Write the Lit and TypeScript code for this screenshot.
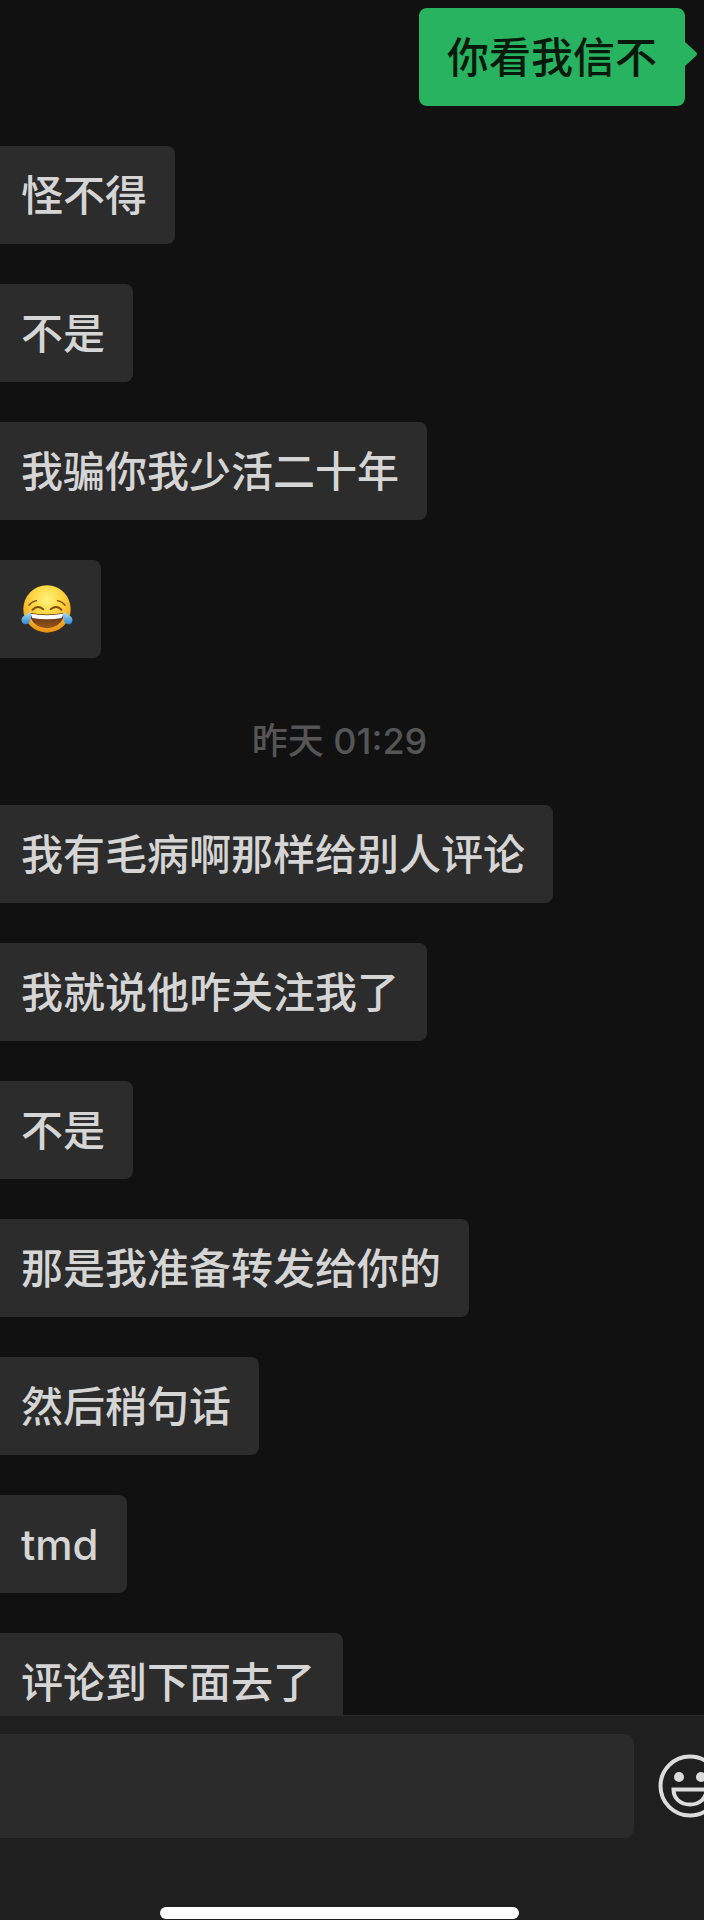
import { LitElement, html, css, svg } from "lit";
import { customElement, property } from "lit/decorators.js";

type Entry =
  | { kind: "sent" | "received"; text: string }
  | { kind: "joy" }
  | { kind: "time"; text: string };

const entries: Entry[] = [
  { kind: "sent", text: "你看我信不" },
  { kind: "received", text: "怪不得" },
  { kind: "received", text: "不是" },
  { kind: "received", text: "我骗你我少活二十年" },
  { kind: "joy" },
  { kind: "time", text: "昨天 01:29" },
  { kind: "received", text: "我有毛病啊那样给别人评论" },
  { kind: "received", text: "我就说他咋关注我了" },
  { kind: "received", text: "不是" },
  { kind: "received", text: "那是我准备转发给你的" },
  { kind: "received", text: "然后稍句话" },
  { kind: "received", text: "tmd" },
  { kind: "received", text: "评论到下面去了" },
];

const tear = svg`
  <path d="M9.200 26.500 C10 30.500 9.800 35.500 7.200 37.800 C4.600 39.900 .6 38.600 .5 34.800 C.4 31 5.200 29.600 9.200 26.500Z" fill="url(#tear)"/>
`;

/* Face with tears of joy */
const joyFace = html`
  <svg class="joy" viewBox="0 0 50 50" role="img" aria-label="笑哭">
    <defs>
      <radialGradient id="skin" cx="50%" cy="30%" r="70%">
        <stop offset="0" stop-color="#fff27c" />
        <stop offset=".45" stop-color="#fcd640" />
        <stop offset=".8" stop-color="#f6ae26" />
        <stop offset="1" stop-color="#e58a14" />
      </radialGradient>
      <linearGradient id="tear" x1="0" y1="0" x2="0" y2="1">
        <stop offset="0" stop-color="#b5e1f5" />
        <stop offset="1" stop-color="#2f86d3" />
      </linearGradient>
      <linearGradient id="mouth" x1="0" y1="0" x2="0" y2="1">
        <stop offset="0" stop-color="#5f2c10" />
        <stop offset="1" stop-color="#97561c" />
      </linearGradient>
    </defs>
    <circle cx="25" cy="24" r="22.800" fill="url(#skin)" />
    <g fill="none" stroke="#7d4a10" stroke-linecap="round">
      <path d="M7.500 20.500 Q10 17 15 16" stroke-width="1.200" />
      <path d="M42.500 20.500 Q40 17 35 16" stroke-width="1.200" />
      <path d="M11 24.800 Q15.500 19.600 21.500 24.200" stroke-width="1.800" />
      <path d="M39 24.800 Q34.500 19.600 28.500 24.200" stroke-width="1.800" />
    </g>
    <path d="M8.500 28 Q25 30.500 41.500 28 C41 37 34 42.500 25 42.500 S9 37 8.500 28Z" fill="url(#mouth)" />
    <path d="M9.500 28.700 Q25 31.200 40.500 28.700 Q40.200 31 39 32.600 Q25 35.400 11 32.600 Q9.800 31 9.500 28.700Z" fill="#fff" />
    ${tear}
    <g transform="matrix(-1 0 0 1 50 0)">${tear}</g>
  </svg>
`;

@customElement("chat-bubble")
class ChatBubble extends LitElement {
  @property({ type: Boolean, reflect: true }) sent = false;

  static styles = css`
    :host {
      display: block;
      align-self: flex-start;
      position: relative;
      box-sizing: border-box;
      padding: 20px 28px 18px 21px;
      border-radius: 0 8px 8px 0;
      background: #2c2c2c;
      color: #d5d5d5;
      font-size: 42px;
      line-height: 60px;
      font-weight: 500;
    }
    :host([sent]) {
      align-self: flex-end;
      margin-right: 19px;
      padding-left: 28px;
      border-radius: 8px;
      background: #27b35f;
      color: #06190d;
    }
    .tail {
      display: none;
      position: absolute;
      left: 100%;
      top: 33px;
      width: 12px;
      height: 26px;
      fill: #27b35f;
    }
    :host([sent]) .tail {
      display: block;
    }
  `;

  render() {
    return html`<slot></slot>
      <svg class="tail" viewBox="0 0 12 26" aria-hidden="true">
        <path d="M-1 0 L0 1 L11 11 Q13 13 11 15 L0 25 L-1 26Z" />
      </svg>`;
  }
}

@customElement("message-composer")
class MessageComposer extends LitElement {
  static styles = css`
    :host {
      display: flex;
      flex-direction: column;
      flex: none;
      overflow: hidden;
      background: #1f1f1f;
      border-top: 1px solid #2b2b2b;
    }
    .row {
      display: flex;
      align-items: center;
      gap: 24px;
      padding-top: 18px;
      margin-right: -18px;
    }
    .field {
      flex: 1;
      min-width: 0;
      height: 104px;
      box-sizing: border-box;
      padding: 0 21px;
      border: 0;
      border-radius: 0 9px 9px 0;
      outline: 0;
      background: #2b2b2b;
      color: #d5d5d5;
      font: inherit;
      font-size: 42px;
    }
    .emoji {
      flex: none;
      width: 64px;
      height: 64px;
      padding: 0;
      border: 0;
      background: none;
      color: #dcdcdc;
    }
    .emoji svg {
      display: block;
      width: 64px;
      height: 64px;
    }
    .foot {
      display: flex;
      justify-content: center;
      padding: 69px 25px 1px 0;
    }
    .home {
      width: 359px;
      height: 12px;
      border-radius: 6px;
      background: #fff;
    }
  `;

  render() {
    return html`
      <div class="row">
        <input class="field" type="text" aria-label="消息" />
        <button class="emoji" type="button" aria-label="表情">
          <svg viewBox="0 0 64 64" fill="none" stroke="currentColor" stroke-width="4">
            <circle cx="32" cy="32" r="29.500" />
            <circle cx="21" cy="23" r="5" fill="currentColor" stroke="none" />
            <circle cx="43" cy="23" r="5" fill="currentColor" stroke="none" />
            <path d="M15.500 35.500 H48.500 C48.500 44.500 41.500 50.500 32 50.500 S15.500 44.500 15.500 35.500Z" />
          </svg>
        </button>
      </div>
      <div class="foot"><div class="home"></div></div>
    `;
  }
}

@customElement("app-root")
class AppRoot extends LitElement {
  static styles = css`
    :host {
      display: flex;
      flex-direction: column;
      height: 100vh;
      overflow: hidden;
      background: #111;
      font-family: Inter, "Noto Sans CJK SC", sans-serif;
    }
    .log {
      flex: 1;
      min-height: 0;
      overflow: hidden;
      display: flex;
      flex-direction: column;
      gap: 40px;
      padding-top: 8px;
    }
    .log > * {
      flex: none;
    }
    .time {
      margin: 0;
      padding: 19px 25px 0 0;
      text-align: center;
      font-size: 36px;
      line-height: 48px;
      font-weight: 500;
      color: #555;
    }
    .joy {
      display: block;
      width: 52px;
      height: 52px;
      margin: 4px 0;
    }
  `;

  private entry(e: Entry) {
    if (e.kind === "time") return html`<p class="time">${e.text}</p>`;
    if (e.kind === "joy") return html`<chat-bubble>${joyFace}</chat-bubble>`;
    return html`<chat-bubble ?sent=${e.kind === "sent"}>${e.text}</chat-bubble>`;
  }

  render() {
    return html`
      <main class="log">${entries.map((e) => this.entry(e))}</main>
      <message-composer></message-composer>
    `;
  }
}
